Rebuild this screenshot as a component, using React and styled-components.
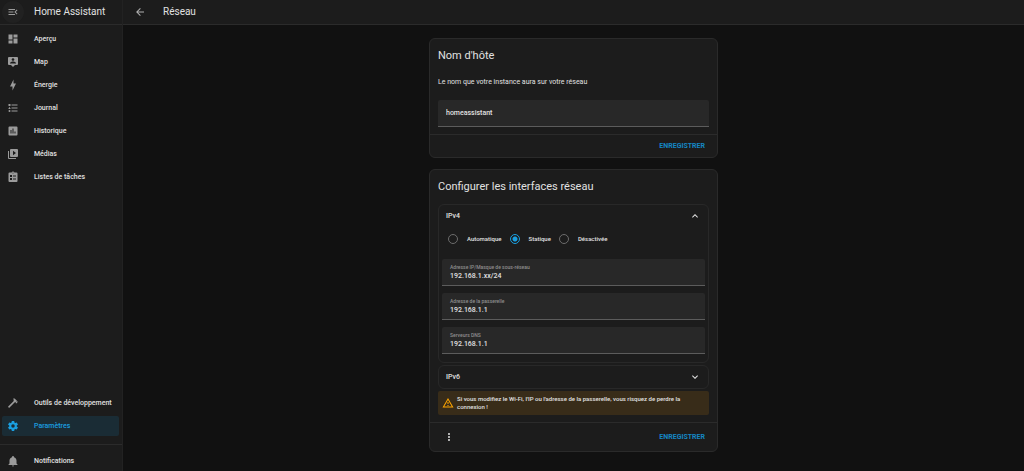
import React, { useState } from "react";
import styled, { createGlobalStyle } from "styled-components";

const GlobalStyle = createGlobalStyle`
  * {
    box-sizing: border-box;
  }
  body {
    margin: 0;
    background: #111111;
    color: #e1e1e1;
    font-family: Roboto, "Liberation Sans", sans-serif;
    font-size: 7px;
    font-weight: 500;
    line-height: 8px;
  }
  button, input {
    font: inherit;
    color: inherit;
  }
`;

const icons = {
  menuOpen: "M21,15.61L19.59,17L14.58,12L19.59,7L21,8.39L17.44,12L21,15.61M3,6H16V8H3V6M3,13V11H13V13H3M3,18V16H16V18H3Z",
  arrowLeft: "M20,11V13H8L13.5,18.5L12.08,19.92L4.16,12L12.08,4.08L13.5,5.5L8,11H20Z",
  dashboard: "M13,3V9H21V3M13,21H21V11H13M3,21H11V15H3M3,13H11V3H3V13Z",
  map: "M20,2H4A2,2 0 0,0 2,4V16A2,2 0 0,0 4,18H8L12,22L16,18H20A2,2 0 0,0 22,16V4A2,2 0 0,0 20,2M12,4.3C13.5,4.3 14.7,5.5 14.7,7C14.7,8.5 13.5,9.7 12,9.7C10.5,9.7 9.3,8.5 9.3,7C9.3,5.5 10.5,4.3 12,4.3M18,15H6V14.1C6,12.1 10,11 12,11C14,11 18,12.1 18,14.1V15Z",
  bolt: "M11 15H6L13 1V9H18L11 23V15Z",
  list: "M5,9.5L7.5,14H2.5L5,9.5M3,4H7V8H3V4M5,20A2,2 0 0,0 7,18A2,2 0 0,0 5,16A2,2 0 0,0 3,18A2,2 0 0,0 5,20M9,5V7H21V5H9M9,19H21V17H9V19M9,13H21V11H9V13Z",
  chart: "M19,3H5A2,2 0 0,0 3,5V19A2,2 0 0,0 5,21H19A2,2 0 0,0 21,19V5A2,2 0 0,0 19,3M9,17H7V10H9V17M13,17H11V7H13V17M17,17H15V13H17V17Z",
  media: "M4,6H2V20A2,2 0 0,0 4,22H18V20H4V6M20,2H8A2,2 0 0,0 6,4V16A2,2 0 0,0 8,18H20A2,2 0 0,0 22,16V4A2,2 0 0,0 20,2M12,14.5V5.5L18,10L12,14.5Z",
  clipboard: "M19,3H14.8A3,3 0 0,0 9.2,3H5A2,2 0 0,0 3,5V20A2,2 0 0,0 5,22H19A2,2 0 0,0 21,20V5A2,2 0 0,0 19,3M12,3A1,1 0 0,1 13,4A1,1 0 0,1 12,5A1,1 0 0,1 11,4A1,1 0 0,1 12,3M6,8H10V12H6V8M12,9H18V11H12V9M6,14H10V18H6V14M12,15H18V17H12V15Z",
  hammer: "M2,19.63L13.43,8.2L12.72,7.5L14.14,6.07L12,3.89C13.2,2.7 15.09,2.7 16.27,3.89L19.87,7.5L18.45,8.91H21.29L22,9.62L18.45,13.21L17.74,12.5V9.62L16.27,11.04L15.56,10.33L4.13,21.76L2,19.63Z",
  cog: "M12,15.5A3.5,3.5 0 0,1 8.5,12A3.5,3.5 0 0,1 12,8.5A3.5,3.5 0 0,1 15.5,12A3.5,3.5 0 0,1 12,15.5M19.43,12.97C19.47,12.65 19.5,12.33 19.5,12C19.5,11.67 19.47,11.34 19.43,11L21.54,9.37C21.73,9.22 21.78,8.95 21.66,8.73L19.66,5.27C19.54,5.05 19.27,4.96 19.05,5.05L16.56,6.05C16.04,5.66 15.5,5.32 14.87,5.07L14.5,2.42C14.46,2.18 14.25,2 14,2H10C9.75,2 9.54,2.18 9.5,2.42L9.13,5.07C8.5,5.32 7.96,5.66 7.44,6.05L4.95,5.05C4.73,4.96 4.46,5.05 4.34,5.27L2.34,8.73C2.21,8.95 2.27,9.22 2.46,9.37L4.57,11C4.53,11.34 4.5,11.67 4.5,12C4.5,12.33 4.53,12.65 4.57,12.97L2.46,14.63C2.27,14.78 2.21,15.05 2.34,15.27L4.34,18.73C4.46,18.95 4.73,19.03 4.95,18.95L7.44,17.94C7.96,18.34 8.5,18.68 9.13,18.93L9.5,21.58C9.54,21.82 9.75,22 10,22H14C14.25,22 14.46,21.82 14.5,21.58L14.87,18.93C15.5,18.67 16.04,18.34 16.56,17.94L19.05,18.95C19.27,19.03 19.54,18.95 19.66,18.73L21.66,15.27C21.78,15.05 21.73,14.78 21.54,14.63L19.43,12.97Z",
  bell: "M21,19V20H3V19L5,17V11C5,7.9 7.03,5.17 10,4.29C10,4.19 10,4.1 10,4A2,2 0 0,1 12,2A2,2 0 0,1 14,4C14,4.1 14,4.19 14,4.29C16.97,5.17 19,7.9 19,11V17L21,19M14,21A2,2 0 0,1 12,23A2,2 0 0,1 10,21",
  chevronUp: "M7.41,15.41L12,10.83L16.59,15.41L18,14L12,8L6,14L7.41,15.41Z",
  chevronDown: "M7.41,8.58L12,13.17L16.59,8.58L18,10L12,16L6,10L7.41,8.58Z",
  alert: "M12,2L1,21H23M12,6L19.53,19H4.47M11,10V14H13V10M11,16V18H13V16",
  dots: "M12,16A2,2 0 0,1 14,18A2,2 0 0,1 12,20A2,2 0 0,1 10,18A2,2 0 0,1 12,16M12,10A2,2 0 0,1 14,12A2,2 0 0,1 12,14A2,2 0 0,1 10,12A2,2 0 0,1 12,10M12,4A2,2 0 0,1 14,6A2,2 0 0,1 12,8A2,2 0 0,1 10,6A2,2 0 0,1 12,4Z",
};

const Icon = ({ name }) => (
  <Svg viewBox="0 0 24 24" aria-hidden="true">
    <path d={icons[name]} />
  </Svg>
);

const mainLinks = [
  { label: "Aperçu", icon: "dashboard" },
  { label: "Map", icon: "map" },
  { label: "Énergie", icon: "bolt" },
  { label: "Journal", icon: "list" },
  { label: "Historique", icon: "chart" },
  { label: "Médias", icon: "media" },
  { label: "Listes de tâches", icon: "clipboard" },
];

const toolLinks = [
  { label: "Outils de développement", icon: "hammer" },
  { label: "Paramètres", icon: "cog", active: true },
];

const methods = ["Automatique", "Statique", "Désactivée"];

const NavItem = ({ label, icon, active }) => (
  <NavLink href="#" $active={active} aria-current={active ? "page" : undefined}>
    <Icon name={icon} />
    {label}
  </NavLink>
);

function Sidebar() {
  return (
    <Aside>
      <SidebarHeader>
        <MenuButton aria-label="Menu">
          <Icon name="menuOpen" />
        </MenuButton>
        <BarTitle>Home Assistant</BarTitle>
      </SidebarHeader>
      <Nav>
        {mainLinks.map((link) => (
          <NavItem key={link.label} {...link} />
        ))}
        <Spacer />
        {toolLinks.map((link) => (
          <NavItem key={link.label} {...link} />
        ))}
      </Nav>
      <NavFooter>
        <NavItem label="Notifications" icon="bell" />
      </NavFooter>
    </Aside>
  );
}

function TextField({ id, label, defaultValue }) {
  return (
    <Field>
      <FieldLabel htmlFor={id}>{label}</FieldLabel>
      <FieldInput id={id} defaultValue={defaultValue} />
    </Field>
  );
}

export default function App() {
  const [method, setMethod] = useState("Statique");
  const [ipv4Open, setIpv4Open] = useState(true);

  return (
    <>
      <GlobalStyle />
      <Page>
        <Sidebar />
        <Main>
          <TopBar>
            <BackButton aria-label="Retour">
              <Icon name="arrowLeft" />
            </BackButton>
            <BarTitle>Réseau</BarTitle>
          </TopBar>

          <Content>
            <Card>
              <CardTitle>Nom d'hôte</CardTitle>
              <CardBody>
                <Description id="hostname-desc">
                  Le nom que votre instance aura sur votre réseau
                </Description>
                <Field>
                  <FieldInput
                    aria-labelledby="hostname-desc"
                    defaultValue="homeassistant"
                  />
                </Field>
              </CardBody>
              <CardActions>
                <SaveButton>ENREGISTRER</SaveButton>
              </CardActions>
            </Card>

            <Card>
              <CardTitle>Configurer les interfaces réseau</CardTitle>
              <CardBody>
                <Panel>
                  <PanelHeader
                    aria-expanded={ipv4Open}
                    onClick={() => setIpv4Open(!ipv4Open)}
                  >
                    IPv4
                    <Icon name={ipv4Open ? "chevronUp" : "chevronDown"} />
                  </PanelHeader>
                  {ipv4Open && (
                    <PanelBody>
                      <RadioRow>
                        {methods.map((m) => (
                          <RadioLabel key={m}>
                            <Radio
                              type="radio"
                              name="ipv4-method"
                              checked={method === m}
                              onChange={() => setMethod(m)}
                            />
                            {m}
                          </RadioLabel>
                        ))}
                      </RadioRow>
                      <FieldStack>
                        <TextField
                          id="address"
                          label="Adresse IP/Masque de sous-réseau"
                          defaultValue="192.168.1.xx/24"
                        />
                        <TextField
                          id="gateway"
                          label="Adresse de la passerelle"
                          defaultValue="192.168.1.1"
                        />
                        <TextField
                          id="dns"
                          label="Serveurs DNS"
                          defaultValue="192.168.1.1"
                        />
                      </FieldStack>
                    </PanelBody>
                  )}
                </Panel>
                <Panel>
                  <PanelHeader aria-expanded={false}>
                    IPv6
                    <Icon name="chevronDown" />
                  </PanelHeader>
                </Panel>
                <Alert role="alert">
                  <Icon name="alert" />
                  <AlertText>
                    Si vous modifiez le Wi-Fi, l'IP ou l'adresse de la
                    passerelle, vous risquez de perdre la connexion !
                  </AlertText>
                </Alert>
              </CardBody>
              <CardActions $tall>
                <IconButton aria-label="Plus d'options">
                  <Icon name="dots" />
                </IconButton>
                <SaveButton>ENREGISTRER</SaveButton>
              </CardActions>
            </Card>
          </Content>
        </Main>
      </Page>
    </>
  );
}

const Svg = styled.svg`
  width: 12px;
  height: 12px;
  flex-shrink: 0;
  fill: currentColor;
`;

const Page = styled.div`
  display: flex;
  min-height: 100vh;
`;

const Aside = styled.aside`
  display: flex;
  flex-direction: column;
  flex: 0 0 123px;
  background: #1c1c1c;
  border-right: 1px solid #222222;
`;

const SidebarHeader = styled.div`
  display: flex;
  align-items: center;
  gap: 10px;
  height: 25px;
  padding: 0 2px 1px;
  border-bottom: 1px solid #2b2b2b;
`;

const BarTitle = styled.h1`
  margin: 0;
  font-size: 10px;
  line-height: 12px;
  font-weight: 400;
`;

const IconButton = styled.button`
  display: flex;
  align-items: center;
  justify-content: center;
  width: 22px;
  height: 22px;
  padding: 0;
  border: 0;
  border-radius: 50%;
  background: transparent;
`;

const MenuButton = styled(IconButton)`
  background: #212121;
  color: #9b9b9b;
`;

const BackButton = styled(IconButton)`
  color: #b0b0b0;
`;

const Nav = styled.nav`
  display: flex;
  flex-direction: column;
  flex: 1;
  gap: 3px;
  padding: 4px 3px 8px 2px;
`;

const Spacer = styled.div`
  flex: 1;
`;

const NavFooter = styled.div`
  padding: 6px 3px 0 2px;
  border-top: 1px solid #2b2b2b;
`;

const NavLink = styled.a`
  display: flex;
  align-items: center;
  gap: 15px;
  height: 20px;
  padding: 0 5px;
  border-radius: 2px;
  background: ${({ $active }) => ($active ? "#1a2c35" : "transparent")};
  color: ${({ $active }) => ($active ? "#1a9fe0" : "#e1e1e1")};
  text-decoration: none;

  svg {
    color: ${({ $active }) => ($active ? "#1a9fe0" : "#9b9b9b")};
  }
`;

const Main = styled.main`
  flex: 1;
  min-width: 0;
`;

const TopBar = styled.header`
  display: flex;
  align-items: center;
  gap: 12px;
  height: 25px;
  padding: 0 6px 1px;
  background: #1c1c1c;
  border-bottom: 1px solid #2b2b2b;
`;

const Content = styled.div`
  display: flex;
  flex-direction: column;
  gap: 11px;
  max-width: 289px;
  margin: 0 auto;
  padding: 13px 0 16px;
`;

const Card = styled.section`
  border: 1px solid #2a2a2a;
  border-radius: 6px;
  background: #1c1c1c;
`;

const CardTitle = styled.h2`
  margin: 0;
  padding: 9px 8px;
  font-size: 11px;
  line-height: 16px;
  font-weight: 400;
`;

const CardBody = styled.div`
  display: flex;
  flex-direction: column;
  gap: 2px;
  padding: 0 8px 7px;
`;

const Description = styled.p`
  margin: 0;
  padding: 5px 0 12px;
  font-weight: 400;
`;

const Field = styled.div`
  display: flex;
  flex-direction: column;
  justify-content: center;
  height: 27px;
  padding: 0 8px;
  border-bottom: 1px solid #5c5c5c;
  border-radius: 2px 2px 0 0;
  background: #282828;
`;

const FieldLabel = styled.label`
  color: #8f8f8f;
  font-size: 5px;
  line-height: 7px;
`;

const FieldInput = styled.input`
  width: 100%;
  height: 9px;
  padding: 0;
  border: 0;
  outline: none;
  background: transparent;
`;

const CardActions = styled.div`
  display: flex;
  align-items: center;
  height: ${({ $tall }) => ($tall ? "29px" : "23px")};
  padding: 0 8px;
  border-top: 1px solid #2b2b2b;
`;

const SaveButton = styled.button`
  margin-left: auto;
  padding: 4px;
  border: 0;
  background: transparent;
  color: #1586c4;
  font-weight: 700;
`;

const Panel = styled.div`
  border: 1px solid #282828;
  border-radius: 6px;
`;

const PanelHeader = styled.button`
  display: flex;
  align-items: center;
  justify-content: space-between;
  width: 100%;
  height: 22px;
  padding: 0 7px;
  border: 0;
  background: transparent;
`;

const PanelBody = styled.div`
  padding: 0 3px 8px;
`;

const RadioRow = styled.div`
  display: flex;
  gap: 8px;
  padding: 7px 6px;
`;

const RadioLabel = styled.label`
  display: flex;
  align-items: center;
  gap: 9px;
  font-size: 6px;
`;

const Radio = styled.input`
  appearance: none;
  width: 10px;
  height: 10px;
  margin: 0;
  border: 1px solid #6c6c6c;
  border-radius: 50%;

  &:checked {
    border-color: #1a9fe0;
    background: radial-gradient(circle, #1a9fe0 2px, transparent 3px);
  }
`;

const FieldStack = styled.div`
  display: flex;
  flex-direction: column;
  gap: 7px;
  padding-top: 8px;
`;

const Alert = styled.div`
  display: flex;
  align-items: center;
  gap: 3px;
  padding: 4px;
  border-radius: 2px;
  background: #382c19;

  svg {
    color: #ffa600;
  }
`;

const AlertText = styled.span`
  flex: 1;
  font-size: 6px;
`;
